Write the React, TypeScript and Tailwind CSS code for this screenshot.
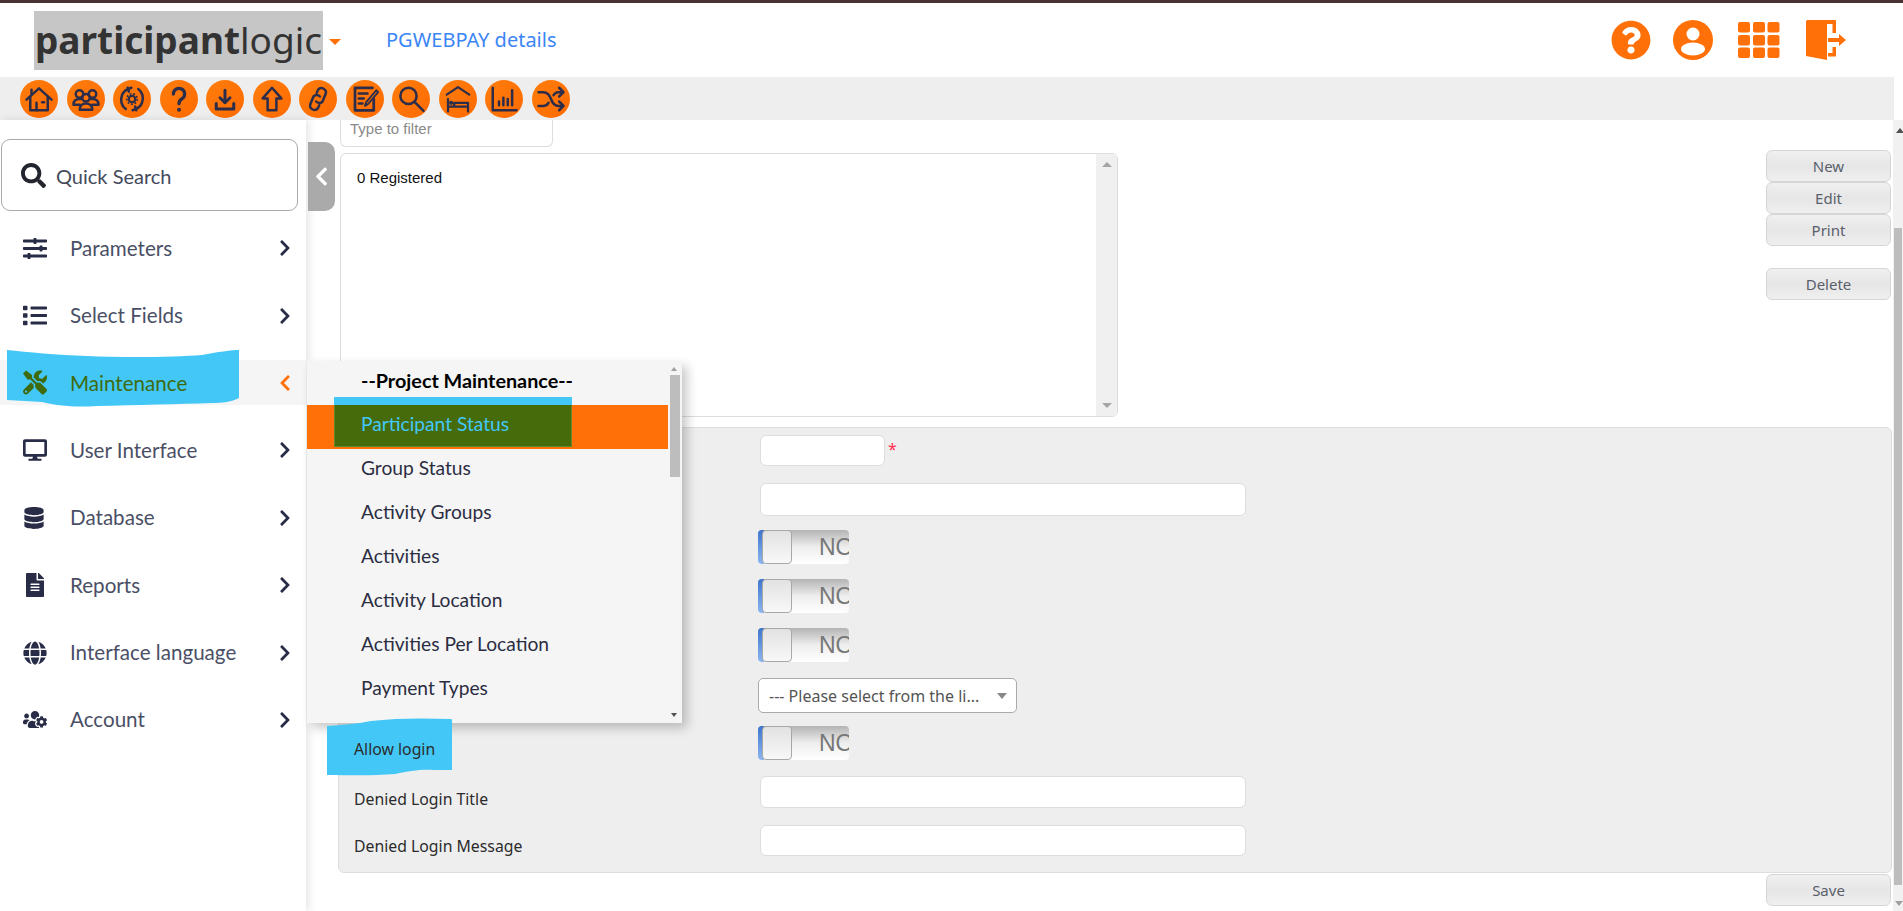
import React from 'react';
import {
  FaChevronLeft,
  FaChevronRight,
  FaDatabase,
  FaDesktop,
  FaFileAlt,
  FaGlobe,
  FaList,
  FaQuestionCircle,
  FaSearch,
  FaSlidersH,
  FaTools,
  FaUsersCog,
} from 'react-icons/fa';

const toolbarIcons: React.ReactNode[] = [
  // home
  <>
    <path d="M2 12.5 12 3.5l10 9" />
    <path d="M5 10.5V21h14V10.5" />
    <path d="M10 21v-6" />
    <path d="M6 8V4.500" />
    <path d="M14.500 14.500h1.500" />
  </>,
  // people
  <>
    <circle cx="6.800" cy="8" r="3" />
    <circle cx="17.200" cy="8" r="3" />
    <circle cx="12" cy="11" r="3" />
    <path d="M2 16.500c0-3 2-4.500 5-4.500h1M22 16.500c0-3-2-4.500-5-4.500h-1M2 16.500h5M22 16.500h-5" />
    <path d="M7 20.500c0-3 2-5 5-5s5 2 5 5Z" />
  </>,
  // sync + gear
  <>
    <path d="M7 20C3.500 17.500 2.500 13 4 9c.8-2.200 2.500-4 5-5M9 4l2.500-1M8.500 3l1 3" />
    <path d="M17 4c3.500 2.500 4.500 7 3 11-.8 2.200-2.500 4-5 5M15 20l-2.500 1M15.500 21l-1-3" />
    <circle cx="12" cy="12" r="2.600" strokeWidth="1.800" />
    <circle cx="12" cy="12" r="4.200" strokeDasharray="1.500 1.400" strokeWidth="1.300" strokeLinecap="butt" />
  </>,
  // question
  <>
    <path d="M7.500 8a4.500 4.500 0 1 1 7 3.700c-1.700 1.100-2.500 2-2.500 4" strokeWidth="2.600" />
    <circle cx="12" cy="20.500" r="0.700" strokeWidth="1.800" />
  </>,
  // download
  <>
    <path d="M12 5v10M8 11l4 4 4-4" strokeWidth="2.400" />
    <path d="M5 15.500V20h14v-4.500" strokeWidth="2.400" />
  </>,
  // up
  <path d="M12 3 4.500 11.500H8.500V21H15.500V11.500H19.500Z" />,
  // link
  <>
    <path d="M10.500 14a3.500 3.500 0 0 0 5 .2l2.500-6a3.500 3.500 0 0 0-6-3.500l-1 2.300" />
    <path d="M13.500 10a3.500 3.500 0 0 0-5-.2l-2.500 6a3.500 3.500 0 0 0 6 3.500l1-2.300" />
  </>,
  // form and pen
  <>
    <path d="M19 12v9H4V3h14" strokeWidth="2.200" />
    <path d="M7 7.500h7M7 11.500h4M7 15.500h3" />
    <path d="M12 17.500l1-3 8-9.500 1.500 1.500-8 9.500Z" strokeWidth="1.500" />
  </>,
  // search
  <>
    <circle cx="10" cy="9.500" r="6.500" />
    <path d="M15 14.500l7 7" />
  </>,
  // bed under roof
  <>
    <path d="M3 8.500 12 2.500l9 6" strokeWidth="1.800" />
    <path d="M4 22V12M20 22v-7H9v3M4 18h16" strokeWidth="1.800" />
    <circle cx="6.500" cy="15" r="0.900" strokeWidth="1.600" />
  </>,
  // chart
  <>
    <path d="M3 3v18h19" />
    <path d="M8 17v-3M11.500 17v-6M15 17v-5M18.500 17V5" />
  </>,
  // shuffle
  <>
    <path d="M2 6.500h4c3.500 0 5 2.500 6 5.500s2.500 5.500 6 5.500h3.500" />
    <path d="M2 17.500h4c2 0 3.300-1 4-2.500M14 9c.8-1.500 2-2.500 4-2.500h3.500" />
    <path d="M18.500 3l3.500 3.500-3.500 3.500M18.500 14l3.500 3.500-3.500 3.500" />
  </>,
];

const menuItems = [
  { label: 'Parameters', icon: <FaSlidersH size={25} /> },
  { label: 'Select Fields', icon: <FaList size={25} /> },
  { label: 'Maintenance', icon: <FaTools size={25} />, active: true },
  { label: 'User Interface', icon: <FaDesktop size={28} /> },
  { label: 'Database', icon: <FaDatabase size={22} /> },
  { label: 'Reports', icon: <FaFileAlt size={24} /> },
  { label: 'Interface language', icon: <FaGlobe size={24} /> },
  { label: 'Account', icon: <FaUsersCog size={31} /> },
];

const flyoutItems = [
  'Group Status',
  'Activity Groups',
  'Activities',
  'Activity Location',
  'Activities Per Location',
  'Payment Types',
];

const GrayButton = ({ label }: { label: string }) => (
  <button
    type="button"
    className="h-[32px] w-[125px] rounded-[6px] border border-[#d6d6d6] bg-linear-to-b from-[#f0f0f0] via-[#e6e6e6] to-[#efefef] text-[15px] text-[#5a5f6b]"
  >
    {label}
  </button>
);

const Toggle = ({ className = '' }: { className?: string }) => (
  <div
    className={`relative -ml-[2px] h-[34px] w-[91px] overflow-hidden rounded-[4px] bg-linear-to-b from-[#b4b4b4] via-[#eeeeee] to-white ${className}`}
  >
    <div className="absolute inset-y-0 left-0 w-[6px] bg-linear-to-b from-[#3c75cd] to-[#8cb6f0]" />
    <div className="absolute inset-y-0 left-[4px] w-[30px] rounded-[4px] border border-[#a8a8a8] bg-linear-to-b from-[#e2e2e2] to-[#f8f8f8]" />
    <span className="absolute left-[61px] top-[3px] whitespace-nowrap font-['Liberation_Sans',sans-serif] text-[23px] leading-[28px] text-[#777777]">
      NO
    </span>
  </div>
);

const FormInput = ({ className = '' }: { className?: string }) => (
  <input
    type="text"
    className={`block rounded-[6px] border border-[#dddddd] bg-white ${className}`}
  />
);

const FormLabel = ({ children, className = 'pt-[13px]' }: { children?: React.ReactNode; className?: string }) => (
  <div className={`relative z-40 -mb-[5px] w-[421px] shrink-0 pl-[15px] text-[15.800px] leading-[20px] text-[#2b2b2b] ${className}`}>
    {children}
  </div>
);

export default function App() {
  return (
    <div className="flex h-screen flex-col overflow-hidden bg-white font-['Noto_Sans',sans-serif]">
      <div className="h-[3px] bg-[#4a3232]" />

      {/* Header */}
      <header className="flex h-[74px] items-center pl-[34px] pr-[57px]">
        <div className="flex h-[59px] w-[289px] items-center justify-center bg-[#c6c6c6] text-[37px] text-[#333333]">
          <span className="font-bold">participant</span>
          <span>logic</span>
        </div>
        <div className="ml-[6px] mt-[4px] h-0 w-0 border-x-[6px] border-t-[6px] border-x-transparent border-t-[#ff7008]" />
        <a className="ml-[45px] text-[20px] text-[#3c85f5]">PGWEBPAY details</a>
        <div className="ml-auto flex items-center text-[#ff7008]">
          <FaQuestionCircle size={40} />
          <svg className="ml-[22px]" width="40" height="40" viewBox="0 0 40 40">
            <circle cx="20" cy="20" r="20" fill="currentColor" />
            <circle cx="20" cy="14" r="6.500" fill="white" />
            <ellipse cx="20" cy="29" rx="12" ry="6.500" fill="white" />
          </svg>
          <svg className="ml-[25px]" width="42" height="36" viewBox="0 0 42 36" fill="currentColor">
            <rect x="0" y="0" width="12" height="10.500" rx="2" />
            <rect x="15" y="0" width="12" height="10.500" rx="2" />
            <rect x="29.500" y="0" width="12" height="10.500" rx="2" />
            <rect x="0" y="13" width="12" height="10.500" rx="2" />
            <rect x="15" y="13" width="12" height="10.500" rx="2" />
            <rect x="29.500" y="13" width="12" height="10.500" rx="2" />
            <rect x="0" y="25.500" width="12" height="10.500" rx="2" />
            <rect x="15" y="25.500" width="12" height="10.500" rx="2" />
            <rect x="29.500" y="25.500" width="12" height="10.500" rx="2" />
          </svg>
          <svg className="ml-[26px]" width="40" height="40" viewBox="0 0 40 40" fill="currentColor">
            <path d="M0 1.500A1.500 1.500 0 0 1 1.500 0H29a1 1 0 0 1 1 1v12h-3.500V4H21v36L0 36Z" />
            <path d="M22 36.500V33h4.500v-6H30v9.500Z" />
            <path d="M22 18h11v-4l7 6-7 6v-4H22Z" />
          </svg>
        </div>
      </header>

      {/* Toolbar */}
      <div className="mr-[9px] flex h-[43px] items-center gap-[8.500px] bg-[#eeeeee] pl-[20px]">
        {toolbarIcons.map((icon, i) => (
          <div
            key={i}
            className="flex h-[38px] w-[38px] items-center justify-center rounded-full bg-linear-to-br from-[#ff7d0d] to-[#ff6a00]"
          >
            <svg
              width="30"
              height="30"
              viewBox="0 0 24 24"
              fill="none"
              stroke="#2b2d4a"
              strokeWidth="2"
              strokeLinecap="round"
              strokeLinejoin="round"
            >
              {icon}
            </svg>
          </div>
        ))}
      </div>

      <div className="relative flex min-h-0 flex-1">
        {/* Sidebar */}
        <aside className="w-[306px] shrink-0 bg-white pt-[19px] shadow-[3px_0_8px_rgba(0,0,0,0.1)]">
          <div className="ml-[1px] flex h-[72px] w-[297px] items-center rounded-[9px] border border-[#aaaaaa] pl-[19px] text-[#444a5c]">
            <FaSearch size={25} className="text-[#22242e]" />
            <span className="ml-[10px] mt-[2px] font-['Lato',sans-serif] text-[20px]">Quick Search</span>
          </div>
          <nav className="mt-[3.500px]">
            {menuItems.map((item) => (
              <div key={item.label} className="flex h-[67.400px] items-center">
                <div
                  className={`relative flex h-[45px] w-full items-center ${item.active ? 'bg-[#f5f5f5] text-[#3f6b0f]' : 'text-[#4a4f66]'}`}
                >
                  {item.active && (
                    <svg
                      className="absolute left-[7px] top-[-10px]"
                      width="232"
                      height="58"
                      viewBox="0 0 232 58"
                      fill="#43c7f6"
                    >
                      <path d="M0 0C20 2 50 5 80 6 120 8 170 7 195 5 210 2 225 0 232 0V48C225 52 215 53 205 53 170 54 130 55 90 56 60 58 45 54 35 52L0 50Z" />
                    </svg>
                  )}
                  <div
                    className={`relative flex w-[47px] shrink-0 justify-start pl-[23px] ${item.active ? 'text-[#3f6b0f]' : 'text-[#282c47]'}`}
                  >
                    {item.icon}
                  </div>
                  <span className="relative ml-[23px] font-['Lato',sans-serif] text-[20.600px]">{item.label}</span>
                  {item.active ? (
                    <FaChevronLeft size={18} className="absolute left-[276px] text-[#ff7008]" />
                  ) : (
                    <FaChevronRight size={18} className="absolute left-[276px] text-[#282c47]" />
                  )}
                </div>
              </div>
            ))}
          </nav>
        </aside>

        {/* Collapse tab */}
        <div className="absolute left-[308px] top-[22px] flex h-[69px] w-[27px] items-center justify-center rounded-r-[10px] bg-[#aaaaaa] text-white">
          <FaChevronLeft size={21} />
        </div>

        {/* Content */}
        <main className="flex min-w-0 flex-1 flex-col pl-[32px]">
          <div className="flex">
            <div className="ml-[2px] w-[778px] shrink-0">
              <input
                type="text"
                placeholder="Type to filter"
                className="block h-[27px] w-[213px] rounded-b-[6px] border-x border-b border-[#dddddd] bg-white pb-[10px] pl-[9px] font-['Liberation_Sans',sans-serif] text-[15px] placeholder:text-[#8a8a8a]"
              />
              <div className="mt-[6px] flex h-[264px] rounded-[6px] border border-[#dddddd]">
                <div className="flex-1 pl-[16px] pt-[13px] font-['Liberation_Sans',sans-serif] text-[15px] text-[#111111]">
                  0 Registered
                </div>
                <div className="flex w-[21px] flex-col items-center justify-between bg-[#f0f0f0] py-[8px] pl-[1px]">
                  <div className="h-0 w-0 border-x-[5px] border-b-[5px] border-x-transparent border-b-[#a6a6a6]" />
                  <div className="h-0 w-0 border-x-[5px] border-t-[5px] border-x-transparent border-t-[#a6a6a6]" />
                </div>
              </div>
            </div>
            <div className="ml-auto mr-[2px] flex flex-col pt-[30px]">
              <GrayButton label="New" />
              <GrayButton label="Edit" />
              <GrayButton label="Print" />
              <div className="mt-[22px]">
                <GrayButton label="Delete" />
              </div>
            </div>
          </div>

          {/* Form panel */}
          <div className="mr-[1px] mt-[10px] h-[446px] rounded-[6px] border border-[#dddddd] bg-[#eeeeee] pt-[7px]">
            <div className="flex">
              <FormLabel />
              <FormInput className="h-[31px] w-[125px]" />
              <span className="ml-[3px] mt-[2px] text-[16px] text-[#ff3050]">*</span>
            </div>
            <div className="mt-[17px] flex">
              <FormLabel />
              <FormInput className="h-[33px] w-[486px]" />
            </div>
            <div className="mt-[14px] flex">
              <FormLabel />
              <Toggle />
            </div>
            <div className="mt-[15px] flex">
              <FormLabel />
              <Toggle />
            </div>
            <div className="mt-[15px] flex">
              <FormLabel />
              <Toggle className="h-[33px]" />
            </div>
            <div className="mt-[16px] flex">
              <FormLabel />
              <div className="-ml-[2px] flex h-[35px] w-[259px] items-center justify-between rounded-[5px] border border-[#aaaaaa] bg-white pl-[10px] pr-[9px] text-[16px] text-[#555555]">
                <span className="whitespace-nowrap">--- Please select from the li...</span>
                <div className="h-0 w-0 border-x-[5px] border-t-[6px] border-x-transparent border-t-[#888888]" />
              </div>
            </div>
            <div className="mt-[13px] flex">
              <FormLabel>Allow login</FormLabel>
              <Toggle />
            </div>
            <div className="mt-[16px] flex">
              <FormLabel>Denied Login Title</FormLabel>
              <FormInput className="h-[32px] w-[486px]" />
            </div>
            <div className="mt-[17px] flex">
              <FormLabel className="pt-[11px]">Denied Login Message</FormLabel>
              <FormInput className="h-[31px] w-[486px]" />
            </div>
          </div>
          <div className="mr-[2px] mt-[1px] self-end">
            <GrayButton label="Save" />
          </div>
        </main>

        {/* Page scrollbar */}
        <div className="relative w-[10px] shrink-0 bg-[#f1f1f1]">
          <div className="absolute left-[3px] top-[8px] h-0 w-0 border-x-[4px] border-b-[5px] border-x-transparent border-b-[#505050]" />
          <div className="absolute inset-x-px bottom-[26px] top-[108px] bg-[#bdbdbd]" />
          <div className="absolute bottom-[5px] left-[2px] h-0 w-0 border-x-[4px] border-t-[5px] border-x-transparent border-t-[#a0a0a0]" />
        </div>

        {/* Maintenance flyout */}
        <div className="absolute left-[307px] top-[241px] z-20 flex h-[362px] w-[375px] bg-[#f5f5f5] font-['Lato',sans-serif] text-[19.200px] text-[#2b2d42] shadow-[5px_5px_10px_rgba(0,0,0,0.22)]">
          <div className="min-w-0 flex-1">
            <div className="flex h-[44px] items-center pb-[5px] pl-[54px] text-[19.800px] font-bold text-black">
              --Project Maintenance--
            </div>
            <div className="relative flex h-[44px] items-center bg-[#ff7008] pb-[5px] pl-[54px]">
              <div className="absolute left-[27px] top-[-8px] h-[8px] w-[238px] bg-[#43c7f6]" />
              <div className="absolute left-[27px] top-0 h-[42px] w-[238px] border-x border-b border-[#5f8a2a] bg-[#456b0b]" />
              <span className="relative text-[#43c7f6]">Participant Status</span>
            </div>
            {flyoutItems.map((label) => (
              <div key={label} className="flex h-[44px] items-center pb-[5px] pl-[54px]">
                {label}
              </div>
            ))}
          </div>
          <div className="relative w-[14px] shrink-0">
            <div className="absolute left-[3px] top-[6px] h-0 w-0 border-x-[3px] border-b-[4px] border-x-transparent border-b-[#a0a0a0]" />
            <div className="absolute left-[2px] top-[14px] h-[102px] w-[10px] bg-[#bdbdbd]" />
            <div className="absolute bottom-[6px] left-[3px] h-0 w-0 border-x-[3px] border-t-[4px] border-x-transparent border-t-[#505050]" />
          </div>
        </div>

        {/* Marker stroke over the Allow login label */}
        <svg
          className="absolute left-[327px] top-[598px] z-30"
          width="125"
          height="58"
          viewBox="0 0 128 58"
          preserveAspectRatio="none"
          fill="#43c7f6"
        >
          <path d="M0 8C15 7 30 6 45 3 70 0 100 0 127 1 128 1 128 2 128 3V52H110C95 51 85 53 70 56 45 58 20 57 0 57Z" />
        </svg>
      </div>
    </div>
  );
}
